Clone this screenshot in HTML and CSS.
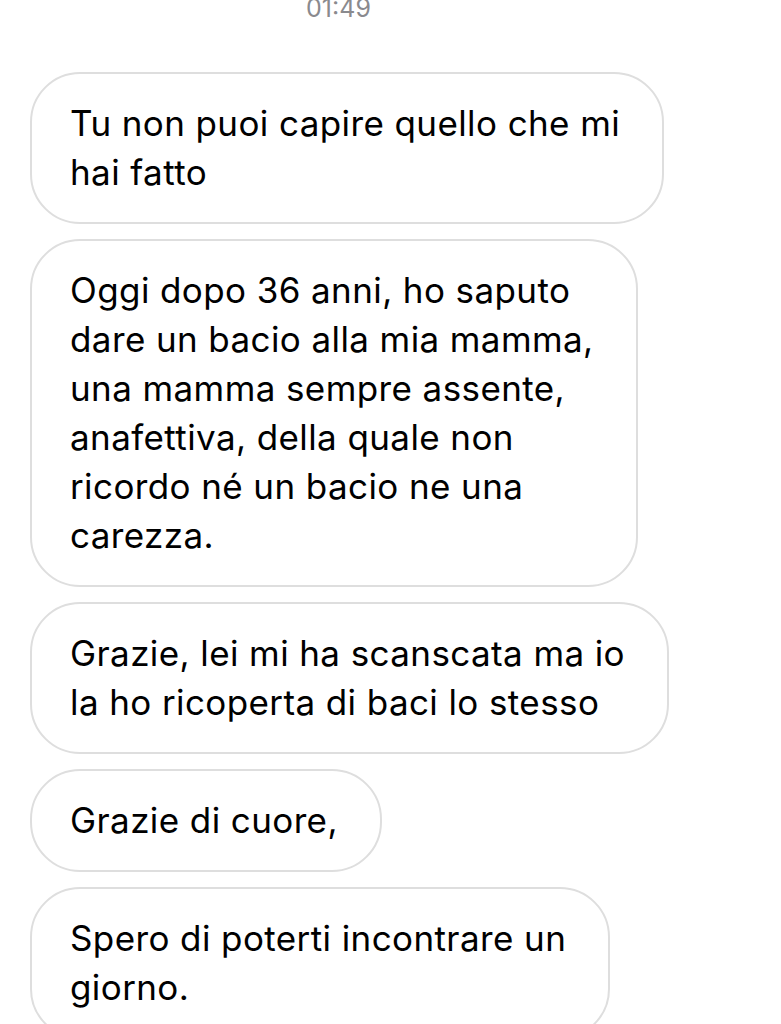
FILE: index.html
```html
<!DOCTYPE html>
<html lang="it">
<head>
<meta charset="utf-8">
<link rel="stylesheet" href="styles.css">
</head>
<body>
<div class="time">01:49</div>
<div class="thread">
  <div class="bubble">Tu non puoi capire quello che mi<br>hai fatto</div>
  <div class="bubble">Oggi dopo 36 anni, ho saputo<br>dare un bacio alla mia mamma,<br>una mamma sempre assente,<br>anafettiva, della quale non<br>ricordo né un bacio ne una<br>carezza.</div>
  <div class="bubble">Grazie, lei mi ha scanscata ma io<br>la ho ricoperta di baci lo stesso</div>
  <div class="bubble">Grazie di cuore,</div>
  <div class="bubble">Spero di poterti incontrare un<br>giorno.</div>
</div>
</body>
</html>
```
FILE: styles.css
```css
html, body {
  margin: 0;
  padding: 0;
  background: #ffffff;
  height: 1024px;
  overflow: hidden;
}
body {
  font-family: Inter, "Liberation Sans", Arial, sans-serif;
  color: #000;
}
.time {
  text-align: center;
  padding-right: 104px;
  font-size: 25px;
  line-height: 26px;
  color: #8a8a8e;
  margin-top: -5px;
  height: 26px;
}
.thread {
  display: flex;
  flex-direction: column;
  align-items: flex-start;
  gap: 15px;
  padding: 51px 0 0 30px;
}
.bubble {
  border: 2px solid #dedede;
  border-radius: 50px;
  padding: 25px 42px 25px 38px;
  font-size: 35px;
  line-height: 49px;
  letter-spacing: 0.4px;
  white-space: nowrap;
}
```
